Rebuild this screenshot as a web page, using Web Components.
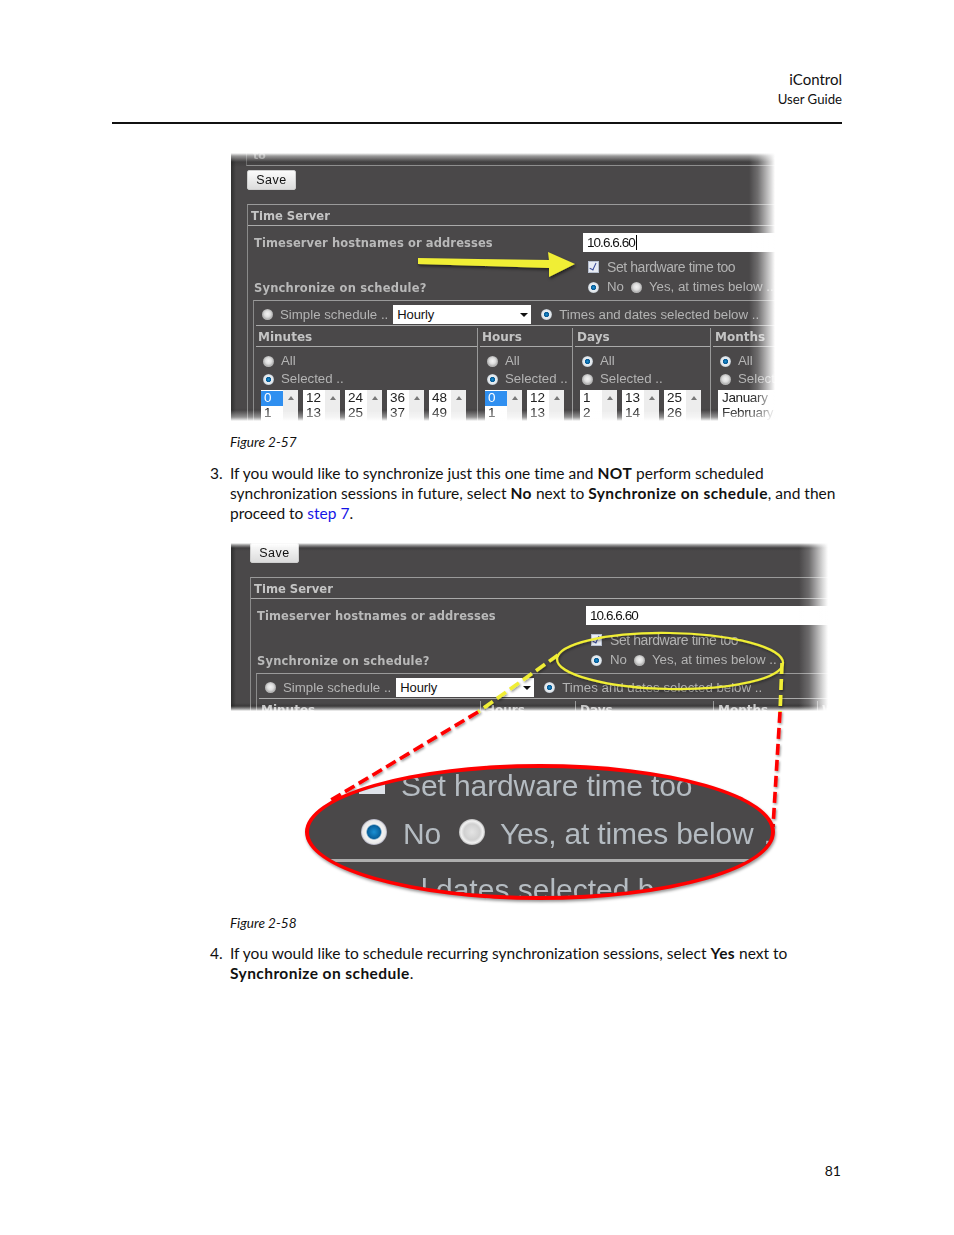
<!DOCTYPE html>
<html lang="en"><head><meta charset="utf-8"><title>iControl User Guide</title>
<style>
html,body{margin:0;padding:0;background:#fff}
body{width:954px;height:1235px;overflow:hidden;font-family:"Lato","Noto Sans",sans-serif;color:#111;font-variant-ligatures:none}
b{font-weight:700;letter-spacing:.43px}
a{color:#1414e6;text-decoration:none}
</style></head><body>
<doc-page>
  <doc-header title-text="iControl" sub-text="User Guide"></doc-header>
  <arrow-figure style="margin-top:29px"></arrow-figure>
  <doc-caption style="margin-top:10px">Figure 2-57</doc-caption>
  <doc-step num="3." style="margin-top:11px">If you would like to synchronize just this one time and <b>NOT</b> perform scheduled<br>synchronization sessions in future, select <b>No</b> next to <b>Synchronize on schedule</b>, and then<br>proceed to <a href="#step7">step 7</a>.</doc-step>
  <zoom-figure style="margin-top:20px"></zoom-figure>
  <doc-caption style="margin-top:13px">Figure 2-58</doc-caption>
  <doc-step num="4." style="margin-top:10px">If you would like to schedule recurring synchronization sessions, select <b>Yes</b> next to<br><b>Synchronize on schedule</b>.</doc-step>
  <doc-folio style="margin-top:178px">81</doc-folio>
</doc-page>
<script>
function def(name, css, html, init){
  customElements.define(name, class extends HTMLElement{
    connectedCallback(){
      if(this.shadowRoot) return;
      const r=this.attachShadow({mode:'open'});
      const h=typeof html==='function'?html(this):html;
      r.innerHTML='<style>'+css+'</style>'+h;
      if(init) init(this,r);
    }
  });
}
def('doc-page',':host{display:block;padding-top:69px;width:954px;box-sizing:border-box}','<slot></slot>');
def('doc-header',`:host{display:block;margin:0 112px;border-bottom:2px solid #111;padding-bottom:13px;text-align:right;line-height:20px;font-size:15px}
 div+div{font-size:13.2px;line-height:20px}`,
 h=>`<div>${h.getAttribute('title-text')}</div><div>${h.getAttribute('sub-text')}</div>`);
def('doc-caption',':host{display:block;margin-left:230px;font-style:italic;font-size:13.6px;line-height:20px}','<slot></slot>');
def('doc-step',`:host{display:grid;grid-template-columns:20px 1fr;margin-left:210px;width:632px;font-size:15.5px;line-height:20px}`,
 h=>`<span>${h.getAttribute('num')}</span><div><slot></slot></div>`);
def('doc-folio',':host{display:block;margin-right:113px;text-align:right;font-size:14px;line-height:20px}','<slot></slot>');

/* ---- pieces of the screenshotted UI ---- */
def('ui-radio',`:host{display:inline-flex;align-items:center;gap:7px;font:13.25px/18px "Liberation Sans",sans-serif;color:#b4b4b4;white-space:nowrap}
 i{display:block;width:11px;height:11px;border-radius:50%;background:radial-gradient(circle closest-side at 50% 45%,#f2f2f2 0,#dedede 60%,#b5b5b5 100%);flex:none;margin-left:-1px}
 :host([checked]) i{background:radial-gradient(circle closest-side at 50% 50%,#1a8fd0 0,#075a95 42%,#e9eef2 54%,#dfe4e8 85%,#a8b0b8 100%)}`,
 '<i></i><span><slot></slot></span>');
def('ui-list',`:host{display:flex;width:37px;height:40px;background:#fff;font:13.5px/14.5px "Liberation Sans",sans-serif;color:#222;flex:none}
 .v{flex:1;padding-top:1px}
 .v div{padding-left:3px;height:14.5px}
 :host([sel]) .v div:first-child{background:#2f8ff0;color:#fff}
 .s{width:15px;background:#ededed;position:relative}
 .s:before{content:"";position:absolute;left:5px;top:6px;border:3px solid transparent;border-top:0;border-bottom:4px solid #777}`,
 h=>`<div class="v"><div>${h.getAttribute('a')}</div><div>${h.getAttribute('b')}</div></div><div class="s"></div>`);

def('time-panel',`:host{display:block;padding-left:var(--inset,16px);font-family:"Liberation Sans",sans-serif;width:700px;box-sizing:border-box}
 .stub{height:12px;border-bottom:1px solid #8e8e8e;border-left:1px solid #6a6a6a;margin-left:-1px;font:bold 11px/6px "DejaVu Sans",sans-serif;color:#8a8a8a;padding-left:6px;overflow:hidden;box-sizing:content-box}
 button{display:block;width:49px;height:20px;margin:4px 0 14px;padding:0;border:1px solid #cfcfcf;border-radius:2px;background:linear-gradient(#fbfbfb,#dcdcdc);font:12.5px/18px "Liberation Sans",sans-serif;letter-spacing:.5px;color:#111}
 .sec{border-top:1px solid #9a9a9a;border-left:1px solid #8a8a8a;height:400px}
 h3,h4{margin:0;font:bold 12px/20px "DejaVu Sans",sans-serif;color:#c4c4c4;white-space:nowrap}
 h3{height:20px;padding-left:3px;border-bottom:1px solid #aaa;font-size:11.6px;line-height:23px}
 .form{display:grid;grid-template-columns:329px 1fr;padding:7px 0 0 6px;height:67px;box-sizing:content-box;grid-template-rows:19px 20px 20px;row-gap:4px}
 .lbl{font:bold 11.5px/20px "DejaVu Sans",sans-serif;color:#b9b9b9;white-space:nowrap;letter-spacing:.1px}
 .lbl.s{margin-top:-2px;letter-spacing:.2px}
 .inp{background:#fff;color:#111;font:13.5px/19px "Liberation Sans",sans-serif;letter-spacing:-.95px;padding-left:4px;white-space:nowrap}
 .caret{display:inline-block;width:1px;height:15px;background:#000;vertical-align:-3px;margin-left:1px}
 .chk{display:flex;align-items:center;gap:8px;font:14px/20px "Liberation Sans",sans-serif;color:#b2b2b2;letter-spacing:-.42px;padding-left:5px;margin-top:4px;height:14px;white-space:nowrap}
 .chk i{width:9px;height:10px;border:1px solid #b8c0d0;background:#e8ecf4;position:relative;flex:none}
 .chk i:after{content:"";position:absolute;left:2px;top:0;width:3px;height:7px;border:solid #3a4a9a;border-width:0 1.5px 1.5px 0;transform:rotate(25deg)}
 .sync{display:flex;gap:8px;padding-left:6px;align-items:center;height:20px;margin-top:-3px}
 .sync ui-radio{gap:7px}
 .sync ui-radio:first-child{gap:8px}
 .box{border-top:1px solid #9a9a9a;border-left:1px solid #8a8a8a;margin-left:5px;padding-left:2px}
 .sched{display:flex;align-items:center;height:25px;box-sizing:border-box;padding-top:3px;border-bottom:1px solid #aaa;padding-left:7px;white-space:nowrap}
 .sel{width:138px;height:19px;background:#fff;margin:0 11px 0 5px;position:relative;color:#111;font:13px/19px "Liberation Sans",sans-serif;letter-spacing:-.1px;padding-left:4px;box-sizing:border-box;flex:none}
 .sel:after{content:"";position:absolute;right:3px;top:8px;border:4px solid transparent;border-bottom:0;border-top:4px solid #111}
 .cols{display:flex;margin-top:2px}
 .col{border-right:1px solid #999;margin-right:2px;height:150px;flex:none;box-sizing:border-box}
 .col:last-child{border-right:0;margin-right:0}
 h4{height:18px;padding-left:2px;line-height:19px;border-bottom:1px solid #aaa}
 .rads{display:flex;flex-direction:column;padding:5px 0 0 8px;height:38px}
 .rads ui-radio{height:18px}
 .lists{display:flex;gap:5px;padding-left:5px}
 .mon{width:80px;background:#fff;font:13.5px/14.5px "Liberation Sans",sans-serif;color:#222;padding:1px 0 0 4px;height:40px;box-sizing:border-box;letter-spacing:-.35px}`,
 h=>{
  const list=(a)=>a.map(([x,y,s])=>`<ui-list a="${x}" b="${y}"${s?' sel':''}></ui-list>`).join('');
  const col=(w,t,f,body)=>`<div class="col" style="width:${w}px"><h4>${t}</h4><div class="rads"><ui-radio${f?' checked':''}>All</ui-radio><ui-radio${f?'':' checked'}>Selected ..</ui-radio></div><div class="lists">${body}</div></div>`;
  const wide=h.hasAttribute('wide');
  return `<div class="stub">to</div>
  <button>Save</button>
  <div class="sec"><h3>Time Server</h3>
   <div class="form">
    <div class="lbl">Timeserver hostnames or addresses</div>
    <div class="inp" style="width:260px">10.6.6.60${wide?'':'<span class="caret"></span>'}</div>
    <div></div>
    <div class="chk"><i></i><span>Set hardware time too</span></div>
    <div class="lbl s">Synchronize on schedule?</div>
    <div class="sync"><ui-radio checked>No</ui-radio><ui-radio>Yes, at times below ..</ui-radio></div>
   </div>
   <div class="box">
    <div class="sched"><ui-radio>Simple schedule ..</ui-radio><div class="sel">Hourly</div><ui-radio checked>Times and dates selected below ..</ui-radio></div>
    <div class="cols">
     ${col(222,'Minutes',0,list([[0,1,1],[12,13],[24,25],[36,37],[48,49]]))}
     ${col(93,'Hours',0,list([[0,1,1],[12,13]]))}
     ${col(136,'Days',1,list([[1,2],[13,14],[25,26]]))}
     ${wide?`<div class="col" style="width:102px"><h4>Months</h4></div><div class="col" style="width:60px"><h4>W</h4></div>`:col(100,'Months',1,'<div class="mon">January<br>February</div>')}
    </div>
   </div>
  </div>`;
 });

/* ---- figures ---- */
def('arrow-figure',`:host{display:block;position:relative;margin-left:231px;width:545px;height:269px;overflow:hidden;background:
   linear-gradient(rgba(30,30,30,.6),rgba(30,30,30,0)) top/100% 14px no-repeat,
   linear-gradient(rgba(30,30,30,0),rgba(30,30,30,.6)) bottom/100% 14px no-repeat,
   linear-gradient(90deg,#2f2f2f,rgba(60,60,60,0)) left/5px 100% no-repeat,#4a4849}
 .w{height:269px;overflow:hidden;filter:blur(.35px)}
 .fade{position:absolute;inset:0;pointer-events:none;background:
   linear-gradient(#fff 0,rgba(255,255,255,.5) 3px,rgba(255,255,255,0) 9px) top/100% 10px no-repeat,
   linear-gradient(rgba(255,255,255,0) 0,rgba(255,255,255,.45) 7px,#fff 11px) bottom/100% 12px no-repeat,
   linear-gradient(90deg,rgba(255,255,255,0) 0,rgba(255,255,255,.22) 9px,rgba(255,255,255,.8) 22px,#fff 26px) right/27px 100% no-repeat}
 svg{position:absolute;left:0;top:0;overflow:visible}`,
 `<div class="w"><time-panel></time-panel></div><div class="fade"></div>
  <svg width="545" height="269" viewBox="0 0 545 269"><defs><filter id="s" x="-10%" y="-30%" width="120%" height="170%"><feDropShadow dx="1" dy="2" stdDeviation="1.5" flood-color="#000" flood-opacity=".55"/></filter></defs>
  <path d="M187 105 L318 107 L317 99 L344 111 L318 124 L318 115 L187 111 Z" fill="#f0ee35" filter="url(#s)"/></svg>`);

def('zoom-figure',`:host{display:block;position:relative;margin-left:231px;width:598px;height:357px}
 .shot{position:relative;height:169px;overflow:hidden;background:
   linear-gradient(rgba(30,30,30,.6),rgba(30,30,30,0)) top/100% 8px no-repeat,
   linear-gradient(rgba(30,30,30,0),rgba(20,20,20,.8)) bottom/100% 9px no-repeat,
   linear-gradient(90deg,#2f2f2f,rgba(60,60,60,0)) left/5px 100% no-repeat,#4a4849}
 .w{height:186px;margin-top:-17px;filter:blur(.35px);--inset:19px}
 .fade{position:absolute;inset:0;background:
   linear-gradient(#fff 0,rgba(255,255,255,.5) 2px,rgba(255,255,255,0) 5px) top/100% 6px no-repeat,
   linear-gradient(rgba(255,255,255,0) 0,rgba(255,255,255,.55) 3px,#fff 5px) bottom/100% 6px no-repeat,
   linear-gradient(90deg,rgba(255,255,255,0) 0,rgba(255,255,255,.2) 10px,rgba(255,255,255,.8) 24px,#fff 29px) right/30px 100% no-repeat}
 .oval{position:absolute;left:74px;top:221px;width:470px;height:136px;box-sizing:border-box;border:4px solid #f00;border-radius:50%;background:#4a4849;overflow:hidden;box-shadow:1px 2px 3px rgba(0,0,0,.4);font-family:"Liberation Sans",sans-serif;color:#b5bcc2;white-space:nowrap}
 .rows{display:flex;flex-direction:column;filter:blur(.4px);font-size:30px;line-height:44px}
 .r1{height:44px;margin:-4px 0 0 92px;letter-spacing:-.1px}
 .r2{display:flex;align-items:center;height:46px;margin:1px 0 0 52px;letter-spacing:-.2px}
 .r2 i{display:block;width:26px;height:26px;border-radius:50%;flex:none}
 .r2 span{position:relative;top:2px}
 .on{background:radial-gradient(circle closest-side,#1a90d4 0,#07609c 50%,#f2f2f2 62%,#e8e8e8 88%,#aab 100%)}
 .off{background:radial-gradient(circle closest-side,#e4e4e4 0,#d0d0d0 62%,#f2f2f2 85%,#bbb 100%)}
 .rule{height:3px;background:#aeaeae;margin:4px 20px 0 20px}
 .r3{margin:6px 0 0 112px;letter-spacing:0}
 .cb{position:absolute;left:50px;top:8px;width:26px;height:18px;background:#dfe3ea}
 svg{position:absolute;left:0;top:0;overflow:visible;pointer-events:none}`,
 `<div class="shot"><div class="w"><time-panel wide></time-panel></div><div class="fade"></div></div>
  <svg width="598" height="357" viewBox="0 0 598 357" fill="none">
   <defs><filter id="d" x="-20%" y="-20%" width="140%" height="140%"><feDropShadow dx="1" dy="1.5" stdDeviation="1" flood-color="#000" flood-opacity=".4"/></filter></defs>
   <g filter="url(#d)">
   <ellipse cx="439" cy="118" rx="113" ry="28" stroke="#f0ee35" stroke-width="2.2" transform="rotate(1 439 118)"/>
   <path d="M327 112 L247 169" stroke="#f0ee35" stroke-width="3.6" stroke-dasharray="11 5"/>
   <path d="M551 120 L549 169" stroke="#f0ee35" stroke-width="3.6" stroke-dasharray="11 5"/>
   <path d="M247 169 L100 257" stroke="#f00" stroke-width="3.6" stroke-dasharray="11 5"/>
   <path d="M549 169 L542 284" stroke="#f00" stroke-width="3.6" stroke-dasharray="11 5"/>
   </g>
  </svg>
  <div class="oval"><div class="cb"></div><div class="rows">
    <div class="r1">Set hardware time too</div>
    <div class="r2"><i class="on"></i><span style="margin-left:16px">No</span><i class="off" style="margin-left:18px"></i><span style="margin-left:15px">Yes, at times below</span><span style="margin-left:10px">.</span></div>
    <div class="rule"></div>
    <div class="r3">l dates selected b</div>
  </div></div>`);
</script>
</body></html>
